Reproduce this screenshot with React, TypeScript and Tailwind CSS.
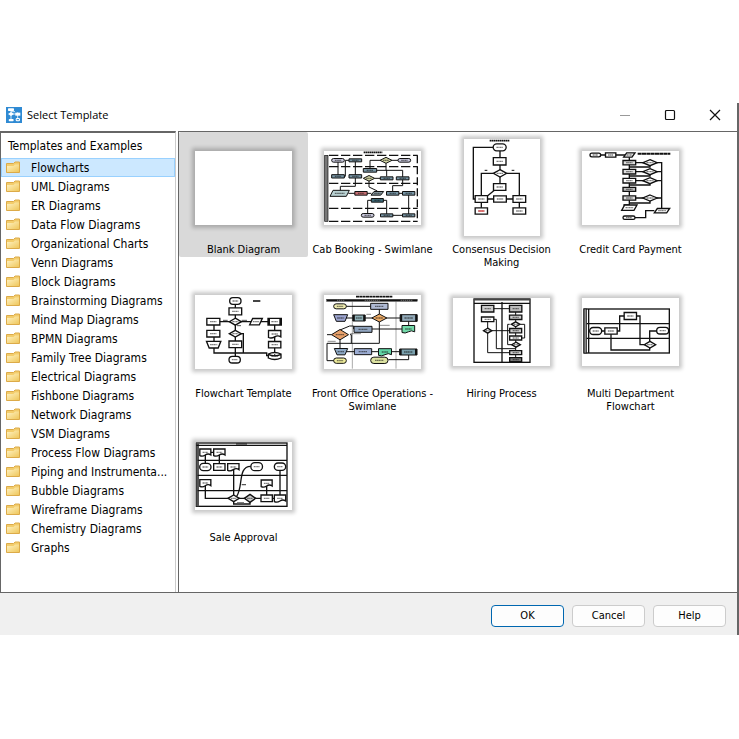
import { useState } from "react";
import type { ReactNode } from "react";
import clsx from "clsx";

const categories = [
  "Flowcharts",
  "UML Diagrams",
  "ER Diagrams",
  "Data Flow Diagrams",
  "Organizational Charts",
  "Venn Diagrams",
  "Block Diagrams",
  "Brainstorming Diagrams",
  "Mind Map Diagrams",
  "BPMN Diagrams",
  "Family Tree Diagrams",
  "Electrical Diagrams",
  "Fishbone Diagrams",
  "Network Diagrams",
  "VSM Diagrams",
  "Process Flow Diagrams",
  "Piping and Instrumenta...",
  "Bubble Diagrams",
  "Wireframe Diagrams",
  "Chemistry Diagrams",
  "Graphs",
];

type Kind = "box" | "pill" | "diamond" | "para" | "trap" | "doc" | "bar" | "cyl";

// kind, centre x, centre y, width, height, fill
type Node = [Kind, number, number, number, number, string?];

function outline(kind: Kind, x: number, y: number, w: number, h: number) {
  const l = x - w / 2;
  const r = x + w / 2;
  const t = y - h / 2;
  const b = y + h / 2;
  if (kind === "diamond") return `M${x} ${t}L${r} ${y}L${x} ${b}L${l} ${y}Z`;
  if (kind === "para") return `M${l + 9} ${t}H${r}L${r - 9} ${b}H${l}Z`;
  if (kind === "trap") return `M${l} ${t}H${r}L${r - 8} ${b}H${l + 8}Z`;
  if (kind === "doc") return `M${l} ${t}H${r}V${b - 2}Q${x + w / 4} ${b - 8} ${x} ${b - 2}T${l} ${b}Z`;
  if (kind === "cyl") return `M${l} ${t + 4}Q${x} ${t - 5} ${r} ${t + 4}V${b - 4}Q${x} ${b + 5} ${l} ${b - 4}ZM${l} ${t + 5}Q${x} ${t + 14} ${r} ${t + 5}`;
  return `M${l} ${t}H${r}V${b}H${l}Z`;
}

function Shapes({ nodes, line = 4 }: { nodes: Node[]; line?: number }) {
  return (
    <>
      {nodes.map(([kind, x, y, w, h, fill = "#fff"], i) => (
        <g key={i}>
          {kind === "pill" ? (
            <rect x={x - w / 2} y={y - h / 2} width={w} height={h} rx={h / 2} fill={fill} strokeWidth={line} />
          ) : (
            <path d={outline(kind, x, y, w, h)} fill={fill} strokeWidth={line} />
          )}
          {kind === "bar" && <path d={`M${x - w / 2 + 3} ${y - h / 2}v${h}M${x + w / 2 - 3} ${y - h / 2}v${h}`} strokeWidth={6} />}
          {/* caption stroke */}
          <path d={`M${x - w / 4} ${y}H${x + w / 4}`} strokeWidth={4} strokeDasharray="5 1 3 1" opacity={0.55} />
        </g>
      ))}
    </>
  );
}

function Sheet({ box, className, children }: { box: string; className: string; children?: ReactNode }) {
  return (
    <svg
      viewBox={box}
      fill="none"
      stroke="#111"
      preserveAspectRatio="none"
      aria-hidden="true"
      className={clsx("bg-white shadow-[0_0_4px_3px_rgba(0,0,0,0.22)]", className)}
    >
      {children}
    </svg>
  );
}

const wide = "h-[74px] w-[97px]";
const low = "h-[68px] w-[97px]";

const blue = "#7795a5";
const lilac = "#c9c8dc";

function CabBooking() {
  return (
    <Sheet box="43 60 291 222" className={wide}>
      <path d="M162 64H218" strokeWidth={5} strokeDasharray="5 1" />
      <rect x={45} y={73} width={10} height={198} fill="#777" strokeWidth={2} />
      <path d="M58 73H324M58 107H324M58 157H324M58 232H324M58 271H324" strokeWidth={4} strokeDasharray="28 8" />
      <path d="M323 73V271" strokeWidth={4} strokeDasharray="24 9" />
      <path
        strokeWidth={3}
        d="M85 88V136H107V88H137V136V166H92V187M181 118V88H212M246 88H265M229 97V118L279 118V142M199 118H231V136M178 142V168L203 180V187M195 142H231M279 142V164H249V187M116 187H185M267 187H297V253M220 208H231V253H297M184 208H174V253"
      />
      <Shapes
        nodes={[
          ["pill", 85, 88, 38, 11, lilac],
          ["box", 137, 88, 38, 9, blue],
          ["diamond", 229, 88, 36, 18, "#d2d5a2"],
          ["pill", 284, 88, 38, 11, lilac],
          ["box", 181, 118, 40, 11, blue],
          ["box", 85, 136, 38, 10, blue],
          ["box", 137, 136, 38, 10, blue],
          ["diamond", 178, 142, 34, 17, "#d2d5a2"],
          ["box", 231, 142, 38, 9, blue],
          ["box", 279, 142, 38, 9, blue],
          ["para", 90, 187, 58, 18, "#b9d1d2"],
          ["box", 154, 187, 37, 11, "#c66f73"],
          ["para", 203, 187, 38, 11, "#8b9da5"],
          ["box", 249, 187, 37, 11, blue],
          ["box", 297, 187, 37, 11, blue],
          ["box", 203, 208, 36, 11, "#3f6d7c"],
          ["pill", 174, 253, 38, 11, lilac],
          ["box", 231, 253, 37, 9, blue],
          ["box", 297, 253, 37, 9, blue],
        ]}
        line={3}
      />
    </Sheet>
  );
}

function Consensus() {
  return (
    <Sheet box="73 26 228 291" className="h-[97px] w-[76px]">
      <path d="M150 31H209" strokeWidth={5} strokeDasharray="5 1" />
      <path
        strokeWidth={4}
        d="M160 51H101V206H107M181 62V168M160 129H125V206V242M202 129H239V242M144 206H220M144 196L166 178"
      />
      <path d="M135 120H143M216 120H224" strokeWidth={3} />
      <Shapes
        nodes={[
          ["pill", 180, 51, 39, 21],
          ["box", 180, 93, 38, 22],
          ["diamond", 181, 129, 40, 22],
          ["box", 180, 170, 37, 20],
          ["box", 125, 206, 37, 20],
          ["box", 181, 206, 38, 19],
          ["box", 239, 206, 38, 20],
          ["box", 125, 242, 37, 19],
          ["box", 239, 242, 38, 19],
        ]}
      />
      <path d="M116 242H134" stroke="#e55" strokeWidth={4} />
    </Sheet>
  );
}

function CreditCard() {
  return (
    <Sheet box="38 60 291 222" className={wide}>
      <path d="M205 68H303" strokeWidth={6} strokeDasharray="12 1" />
      <path
        strokeWidth={4}
        d="M78 72H180V95V222H162M180 95H277V239M180 122H277M180 149H277M180 201H277M242 104V108H180M242 131V135H180M242 158V162H180M242 210V216H180M255 239H229V260H195"
      />
      <Shapes
        nodes={[
          ["pill", 78, 72, 32, 11],
          ["box", 124, 72, 31, 13],
          ["para", 180, 72, 34, 13],
          ["box", 180, 95, 38, 13, "#ddd"],
          ["diamond", 242, 95, 43, 18],
          ["box", 180, 122, 38, 14, "#ddd"],
          ["diamond", 242, 122, 43, 18],
          ["box", 180, 149, 38, 14],
          ["diamond", 242, 149, 43, 18],
          ["box", 180, 175, 38, 12, "#bbb"],
          ["box", 180, 201, 38, 13, "#ddd"],
          ["diamond", 242, 201, 43, 18],
          ["para", 180, 230, 46, 16],
          ["pill", 179, 260, 36, 10],
          ["para", 278, 239, 46, 13],
        ]}
      />
    </Sheet>
  );
}

function FlowchartTemplate() {
  return (
    <Sheet box="47 42 291 222" className={wide}>
      <path d="M221 60H243" strokeWidth={6} stroke="#444" />
      <path d="M168 60V236M104 122H286V226M104 122V216H262V224H270M185 158H192V216" strokeWidth={4} />
      <path d="M131 118H145M187 118H203M173 134H185" strokeWidth={3} stroke="#555" />
      <Shapes
        nodes={[
          ["pill", 168, 60, 34, 20],
          ["box", 168, 91, 38, 21],
          ["box", 102, 122, 39, 20],
          ["diamond", 168, 122, 36, 21],
          ["para", 230, 122, 38, 19],
          ["bar", 286, 122, 40, 20],
          ["box", 102, 158, 39, 20],
          ["diamond", 168, 158, 36, 20],
          ["doc", 286, 159, 37, 21],
          ["trap", 103, 191, 43, 20],
          ["box", 168, 190, 38, 20],
          ["box", 286, 191, 37, 19],
          ["pill", 166, 236, 34, 20],
          ["cyl", 286, 225, 38, 20],
        ]}
      />
    </Sheet>
  );
}

function FrontOffice() {
  return (
    <Sheet box="43 42 291 222" className={wide}>
      <path d="M139 47H249" strokeWidth={5} strokeDasharray="9 1" />
      <path d="M128 62V263M259 62V263" stroke="#aaa" strokeWidth={3} />
      <rect x={51} y={55} width={272} height={6} fill="#111" />
      <path d="M82 58H105M165 58H210M273 58H310" stroke="#999" strokeWidth={2} strokeDasharray="4 2" />
      <path
        strokeWidth={3}
        d="M91 76H209V187H52V239H90M52 161H66M95 111H297V144H132V135H120L91 147V212H297V236H236M121 161H125V187"
      />
      <Shapes
        line={3}
        nodes={[
          ["pill", 91, 76, 38, 15, "#eeebb0"],
          ["box", 209, 76, 52, 18, "#afbad4"],
          ["trap", 93, 111, 42, 20, "#9ca4cf"],
          ["bar", 148, 111, 37, 18, "#8fb0b7"],
          ["diamond", 209, 111, 45, 24, "#efad68"],
          ["bar", 297, 111, 51, 20, "#91a9b8"],
          ["box", 160, 145, 54, 18, "#91a5c0"],
          ["doc", 296, 144, 38, 21, "#72d9a9"],
          ["diamond", 91, 161, 51, 31, "#e7a06a"],
          ["trap", 94, 212, 40, 19, "#8ea9c5"],
          ["box", 160, 212, 52, 18, "#9bacd2"],
          ["doc", 226, 213, 39, 20, "#61d5a5"],
          ["bar", 296, 213, 52, 18, "#7aa0ad"],
          ["pill", 91, 239, 38, 16, "#f0ed9c"],
          ["pill", 209, 238, 52, 19, "#dce2a1"],
        ]}
      />
      <path d="M54 181H78M122 158H154M170 100H184M211 133H240" stroke="#555" strokeWidth={2} />
    </Sheet>
  );
}

function Hiring() {
  return (
    <Sheet box="38 50 291 204" className={low}>
      <rect x={101} y={53} width={168} height={190} strokeWidth={4} />
      <path d="M101 55H269" strokeWidth={5} stroke="#444" />
      <path d="M101 66H269M185 62V243" strokeWidth={4} />
      <path
        strokeWidth={3}
        d="M142 82H226V129V242M142 114V148V214H226M142 148H208M161 114H168V202H226M208 129H202V190H214M240 129H253V170H226"
      />
      <Shapes
        nodes={[
          ["box", 142, 82, 37, 20, "#ccc"],
          ["box", 142, 114, 37, 14],
          ["diamond", 142, 148, 25, 15],
          ["box", 226, 82, 37, 20, "#bbb"],
          ["box", 226, 108, 37, 13, "#ccc"],
          ["diamond", 226, 129, 26, 15],
          ["box", 226, 148, 36, 13, "#ccc"],
          ["box", 226, 170, 36, 12],
          ["diamond", 227, 190, 26, 15],
          ["box", 226, 214, 36, 12, "#ccc"],
          ["box", 226, 235, 36, 12, "#777"],
        ]}
      />
    </Sheet>
  );
}

function MultiDepartment() {
  return (
    <Sheet box="38 50 291 204" className={low}>
      <rect x={44} y={83} width={256} height={132} strokeWidth={4} />
      <rect x={44} y={83} width={8} height={132} fill="#888" strokeWidth={2} />
      <path d="M58 83V215M52 127H300M52 171H300" strokeWidth={4} />
      <path d="M79 149H151V104H212V190H241V206H125V158M241 181V149H264" strokeWidth={4} />
      <Shapes
        nodes={[
          ["pill", 79, 149, 36, 21],
          ["box", 125, 149, 37, 19],
          ["box", 183, 104, 37, 21],
          ["diamond", 242, 190, 34, 20],
          ["pill", 280, 148, 36, 20],
        ]}
      />
    </Sheet>
  );
}

function SaleApproval() {
  return (
    <Sheet box="47 33 291 204" className={low}>
      <rect x={51} y={36} width={272} height={190} strokeWidth={4} />
      <path d="M55 36V226" stroke="#555" strokeWidth={8} />
      <path d="M51 43H323M55 88H323M55 133H323M55 179H323" strokeWidth={4} />
      <path d="M170 39H203" strokeWidth={3} />
      <path
        strokeWidth={4}
        d="M78 64H120V108M78 64V108M163 108V202M78 156V202H302V108M163 202V219H212V202M172 196C192 168 175 106 214 106M262 156V202"
      />
      <Shapes
        nodes={[
          ["doc", 78, 64, 33, 20],
          ["doc", 120, 64, 34, 20],
          ["pill", 78, 108, 34, 22],
          ["box", 120, 108, 34, 20],
          ["doc", 162, 108, 34, 20],
          ["pill", 232, 107, 35, 24],
          ["pill", 302, 107, 34, 22],
          ["doc", 78, 156, 33, 20],
          ["doc", 262, 157, 33, 20],
          ["diamond", 163, 202, 34, 20],
          ["diamond", 212, 202, 34, 24, "#ccc"],
          ["box", 262, 202, 34, 20],
          ["doc", 302, 202, 34, 20],
        ]}
      />
      <path d="M173 216H194M187 161H200" strokeWidth={4} stroke="#555" />
    </Sheet>
  );
}

const templates = [
  { name: "Blank Diagram", sheet: <Sheet box="0 0 97 74" className={wide} /> },
  { name: "Cab Booking - Swimlane", sheet: <CabBooking /> },
  { name: "Consensus Decision Making", sheet: <Consensus /> },
  { name: "Credit Card Payment", sheet: <CreditCard /> },
  { name: "Flowchart Template", sheet: <FlowchartTemplate /> },
  { name: "Front Office Operations - Swimlane", sheet: <FrontOffice /> },
  { name: "Hiring Process", sheet: <Hiring /> },
  { name: "Multi Department Flowchart", sheet: <MultiDepartment /> },
  { name: "Sale Approval", sheet: <SaleApproval /> },
];

function FolderIcon() {
  return (
    <svg viewBox="0 0 14 13" className="h-[13px] w-[14px] shrink-0" aria-hidden="true">
      <defs>
        <linearGradient id="folder" x1="0" y1="0" x2="1" y2="1">
          <stop offset="0" stopColor="#fff3c4" />
          <stop offset="1" stopColor="#efc75c" />
        </linearGradient>
      </defs>
      <path d="M.5 11.5V2.5h7l1.5-1.5h4.500v10.500z" fill="#f3cd6c" stroke="#dcaa48" />
      <path d="M1 5h6.500l1.500-1.500h4V11H1z" fill="url(#folder)" />
    </svg>
  );
}

function AppIcon() {
  return (
    <svg viewBox="0 0 48 48" className="h-4 w-4 shrink-0" aria-hidden="true">
      <rect width="48" height="48" fill="#2f8ad3" />
      <path d="M15 8v32M15 21h20v18M35 21v-5M15 14h12" stroke="#cfe8fb" strokeWidth="3" fill="none" />
      <g fill="#fff">
        <rect x="6" y="4" width="18" height="8" rx="2" />
        <path d="M15 15l9 6-9 6-9-6z" />
        <rect x="28" y="17" width="15" height="9" />
        <rect x="8" y="36" width="15" height="7" rx="3" />
        <rect x="29" y="33" width="13" height="10" rx="4" />
      </g>
      <path d="M32 38h7" stroke="#2f8ad3" strokeWidth="3" />
    </svg>
  );
}

export default function App() {
  const [category, setCategory] = useState("Flowcharts");
  const [template, setTemplate] = useState("Blank Diagram");

  return (
    <main className="min-h-screen bg-white pt-[103px] font-['DejaVu_Sans_Condensed','DejaVu_Sans',sans-serif] text-black">
      <section className="border-r-2 border-[#666] bg-white">
        <header className="flex h-7 items-center pb-1 pl-1.5">
          <AppIcon />
          <h1 className="ml-[5px] font-['Open_Sans',sans-serif] text-[11px] leading-4">Select Template</h1>
          <div className="ml-auto flex items-center">
            <button aria-label="Minimize" className="flex h-6 w-[45px] items-center justify-center">
              <svg viewBox="0 0 12 12" className="h-3 w-3" stroke="#999" fill="none">
                <path d="M1 6.5h10" />
              </svg>
            </button>
            <button aria-label="Maximize" className="flex h-6 w-[45px] items-center justify-center">
              <svg viewBox="0 0 12 12" className="h-3 w-3" stroke="#111" fill="none">
                <rect x="1.5" y="1.5" width="9" height="9" rx="1" strokeWidth="1.2" />
              </svg>
            </button>
            <button aria-label="Close" className="flex h-6 w-[45px] items-center justify-center">
              <svg viewBox="0 0 12 12" className="h-3 w-3" stroke="#111" fill="none">
                <path d="M1 1l10 10M11 1L1 11" strokeWidth="1.2" />
              </svg>
            </button>
          </div>
        </header>

        <div className="flex border-b border-[#666]">
          <nav className="mr-0.5 w-44 shrink-0 border-x border-t-2 border-t-[#666] border-r-[#ccc] border-l-[#666] pb-[35px]">
            <h2 className="pt-[5px] pb-1 pl-[7px] text-[12px] leading-4">Templates and Examples</h2>
            {categories.map((name) => (
              <button
                key={name}
                onClick={() => setCategory(name)}
                className={clsx(
                  "flex h-[19px] w-full items-center gap-[11px] border pl-1 text-left text-[12px] whitespace-nowrap",
                  name === category ? "border-[#99d1ff] bg-[#cce8ff]" : "border-transparent",
                )}
              >
                <FolderIcon />
                {name}
              </button>
            ))}
          </nav>

          <div className="grid grow auto-rows-[144px] grid-cols-[repeat(auto-fill,129px)] items-start border-t border-l border-[#666]">
            {templates.map(({ name, sheet }) => (
              <button
                key={name}
                onClick={() => setTemplate(name)}
                className={clsx(
                  "flex flex-col items-center gap-[7px] pt-[7px] pb-px",
                  name === template && "rounded-xs bg-[#d9d9d9]",
                )}
              >
                <span className="flex h-[97px] items-center">{sheet}</span>
                <span className="text-[11px] leading-[13px]">{name}</span>
              </button>
            ))}
          </div>
        </div>

        <footer className="flex justify-end gap-2 bg-[#f0f0f0] pt-3 pr-[11px] pb-2">
          {["OK", "Cancel", "Help"].map((label) => (
            <button
              key={label}
              className={clsx(
                "h-[22px] w-[73px] rounded-sm border bg-[#fdfdfd] text-[11px]",
                label === "OK" ? "border-[#0067b0]" : "border-[#ccc]",
              )}
            >
              {label}
            </button>
          ))}
        </footer>
      </section>
    </main>
  );
}
